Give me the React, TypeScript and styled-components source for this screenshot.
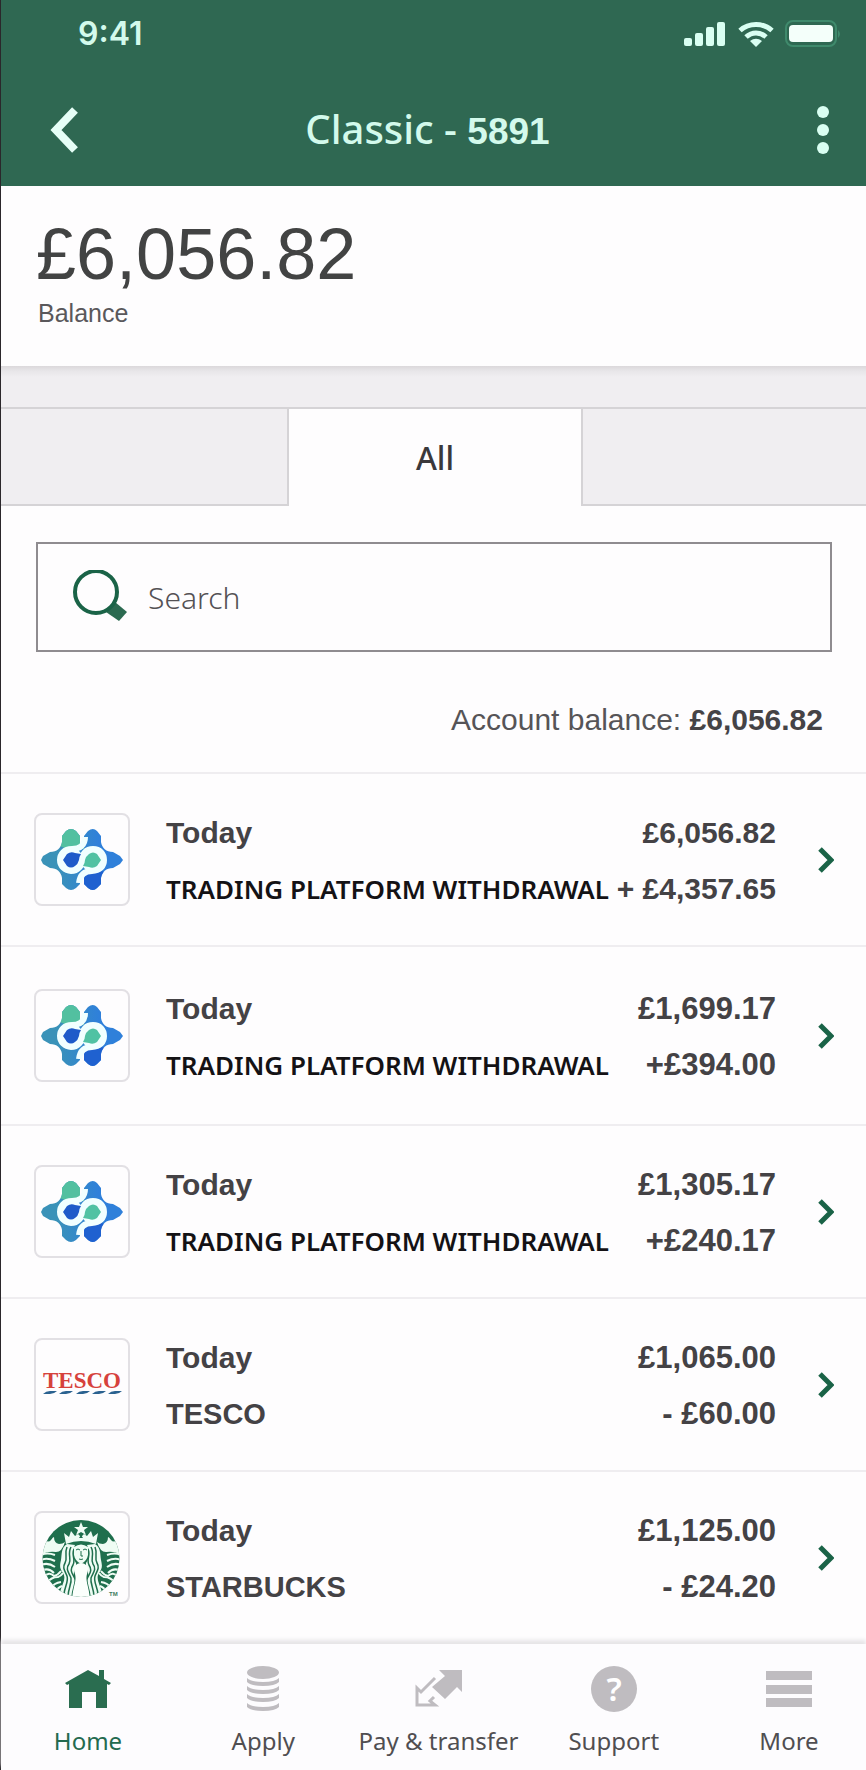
import React from "react";
import styled, { createGlobalStyle } from "styled-components";

const sans = '"Liberation Sans", Arial, sans-serif';
const brand = '"Noto Sans", "Open Sans", sans-serif';

const GlobalStyle = createGlobalStyle`
  *, *::before, *::after { box-sizing: border-box; }
  body { margin: 0; background: #fefdfe; }
  h1, p, ul { margin: 0; padding: 0; }
  button { border: 0; padding: 0; background: none; font: inherit; color: inherit; cursor: pointer; }
  a { color: inherit; text-decoration: none; }
  svg { display: block; }
`;

const Screen = styled.div`
  display: flex;
  flex-direction: column;
  min-height: 100vh;
  border-left: 1px solid #2b272b;
  background: #fefdfe;
  color: #444245;
  font-family: ${sans};
`;

const Header = styled.header`
  background: #2f6852;
  color: #d3faec;
`;

const StatusBar = styled.div`
  display: flex;
  align-items: center;
  justify-content: space-between;
  height: 68px;
  padding: 0 24px 0 77px;
`;

const Clock = styled.time`
  font: 600 32px/40px Inter, sans-serif;
`;

const StatusIcons = styled.div`
  display: flex;
  align-items: center;
  gap: 11px;
`;

const TitleBar = styled.div`
  display: flex;
  align-items: center;
  justify-content: space-between;
  height: 118px;
  padding: 6px 24px 0 12px;
`;

const BarButton = styled.button<{ $end?: boolean }>`
  display: flex;
  align-items: center;
  justify-content: ${(p) => (p.$end ? "flex-end" : "center")};
  width: 102px;
  height: 64px;
  padding-right: ${(p) => (p.$end ? "13px" : "0")};
`;

const Title = styled.h1`
  font: 500 40px/56px ${brand};
  white-space: nowrap;
`;

const AccountNumber = styled.span`
  font: 700 37px/56px ${sans};
`;

const Summary = styled.section`
  min-height: 180px;
  padding: 32px 35px 0;
`;

const Total = styled.p`
  font-size: 72px;
  line-height: 72px;
  color: #424343;
`;

const TotalLabel = styled.p`
  margin-top: 9px;
  padding-left: 2px;
  font-size: 25px;
  line-height: 28px;
  color: #5a585b;
`;

const Divider = styled.div`
  height: 41px;
  background: linear-gradient(#dbd8db, #e8e6e9 5px, #f0eef1 11px);
`;

const Tabs = styled.div`
  display: grid;
  grid-template-columns: 288fr 292fr 285fr;
  height: 99px;
  border-top: 2px solid #d5d3d6;
`;

const Tab = styled.button<{ $edge?: "left" | "right" }>`
  background: ${(p) => (p.$edge ? "#f0eef1" : "#fefdfe")};
  border: 0 solid #d5d3d6;
  border-bottom-width: ${(p) => (p.$edge ? "2px" : "0")};
  border-right-width: ${(p) => (p.$edge === "left" ? "2px" : "0")};
  border-left-width: ${(p) => (p.$edge === "right" ? "2px" : "0")};
  font: 500 32px/44px ${brand};
  color: #3a383b;
`;

const SearchBox = styled.label`
  display: flex;
  align-items: center;
  gap: 21px;
  height: 110px;
  margin: 36px 34px 0 35px;
  padding: 0 35px;
  border: 2px solid #8f8c90;
`;

const SearchInput = styled.input`
  flex: 1;
  min-width: 0;
  border: 0;
  padding: 2px 0 0;
  outline: 0;
  background: transparent;
  font: 300 30px/44px ${brand};
  color: #444245;
  &::placeholder {
    color: #545155;
    opacity: 1;
  }
`;

const AccountBalance = styled.p`
  padding: 50px 43px 34px;
  font-size: 30px;
  line-height: 36px;
  text-align: right;
  color: #565457;
  strong { color: #454346; }
`;

const List = styled.ul`
  flex: 1;
  list-style: none;
`;

const Row = styled.a<{ $tall?: boolean }>`
  display: flex;
  align-items: center;
  min-height: ${(p) => (p.$tall ? "179px" : "173px")};
  padding: 0 32px 0 33px;
  border-top: 2px solid #efedf0;
`;

const Logo = styled.span`
  flex: none;
  width: 96px;
  height: 93px;
  border: 2px solid #e2e0e4;
  border-radius: 8px;
  svg { margin: -2px; }
`;

const Details = styled.span`
  flex: 1;
  display: grid;
  grid-template-columns: 1fr auto;
  row-gap: 22px;
  margin: 0 42px 0 36px;
  padding-top: 2px;
  line-height: 34px;
  font-weight: 700;
  white-space: nowrap;
`;

const Day = styled.span`
  font-size: 30px;
`;

const Payee = styled.span<{ $platform?: boolean }>`
  font: ${(p) => (p.$platform ? `600 26px/34px ${brand}` : `700 29px/34px ${sans}`)};
  color: ${(p) => (p.$platform ? "#141215" : "#444245")};
`;

const Amount = styled.span<{ $latest?: boolean }>`
  font-size: ${(p) => (p.$latest ? "30px" : "31px")};
  text-align: right;
`;

const BottomNav = styled.nav`
  display: flex;
  justify-content: space-between;
  padding: 22px 0 13px 10px;
  background: #fdfcfe;
  box-shadow: 0 -4px 4px #e6e4e7;
`;

const NavItem = styled.a<{ $active?: boolean }>`
  display: flex;
  flex-direction: column;
  align-items: center;
  gap: 13px;
  width: 154px;
  font: 400 24px/32px ${brand};
  white-space: nowrap;
  color: ${(p) => (p.$active ? "#246a4f" : "#504e51")};
`;

const NavIcon = styled.span`
  display: flex;
  align-items: center;
  height: 46px;
`;

const Signal = () => (
  <svg width="43" height="26" fill="#d9fff2" aria-hidden="true">
    <rect x="0" y="17" width="8" height="8" rx="2" />
    <rect x="11" y="12" width="8" height="13" rx="2" />
    <rect x="22" y="6" width="8" height="19" rx="2" />
    <rect x="33" y="1" width="8" height="24" rx="2" />
  </svg>
);

const Wifi = () => (
  <svg width="36" height="26" viewBox="0 0 36 26" fill="none" stroke="#d9fff2" strokeWidth="5" aria-hidden="true">
    <path d="M2 9.5C11 1.5 25 1.5 34 9.5" />
    <path d="M8 16C14 10.5 22 10.5 28 16" />
    <path d="M12 20Q18 15.5 24 20L18 26Z" fill="#d9fff2" stroke="none" />
  </svg>
);

const Battery = () => (
  <svg width="57" height="28" aria-hidden="true">
    <rect x="1" y="1" width="50" height="25" rx="7" fill="none" stroke="#3f8a6c" strokeWidth="2" />
    <rect x="4" y="5" width="44" height="17" rx="4" fill="#f4fffa" />
    <path d="M53 10q4 4 0 8z" fill="#3f8a6c" />
  </svg>
);

const TradingLogo = () => (
  <svg width="96" height="93" viewBox="0 0 96 93" aria-hidden="true">
    <defs>
      <linearGradient id="petals" x1="0" x2="1" y1="0" y2="0">
        <stop offset="0.2" stopColor="#3a92b8" />
        <stop offset="0.7" stopColor="#2f80da" />
      </linearGradient>
      <clipPath id="petal-outline">
        <path d="M7 47L9 43L16 39C23 39 27 35 28 29V23L32 18Q37 14 42 18L46 23V34H50V23L54 18Q59 14 63 18L67 23V29C68 35 72 39 79 39L86 43L89 47L86 51L79 55C72 55 68 59 67 65V71L63 75Q59 79 54 75L50 71V60H46V71L42 75Q37 79 32 75L28 71V65C27 59 23 55 16 55L9 51Z" />
      </clipPath>
    </defs>
    <g clipPath="url(#petal-outline)">
      <rect x="5" y="12" width="86" height="68" fill="url(#petals)" />
      <path fill="#52c0a0" d="M20 12H50V36H33L26 33Z" />
      <path fill="#1f61d0" d="M47 80H72V60L66 57H50Z" />
      <circle cx="37" cy="47" r="12" fill="#f1ffff" />
      <circle cx="59" cy="47" r="12" fill="#f1ffff" />
    </g>
    <path
      fill="none"
      stroke="#f1ffff"
      strokeWidth="6"
      d="M51 24C51 32 46 36 38 36C30 36 26 41 26 47C26 53 31 58 37 58C44 58 48 53 48 47C48 41 52 36 59 36C66 36 70 41 70 47C70 53 66 58 58 58C50 58 46 62 45 70"
    />
    <path fill="#1e5bc9" d="M29 47L33 41Q37 38 41 40L47 41Q45 44 45 47Q44 51 41 53Q37 56 33 53Z" />
    <path fill="#50c2a3" d="M67 47L63 41Q59 38 55 41Q52 43 51 47Q51 50 49 53L55 54Q59 56 63 53Z" />
  </svg>
);

const TescoLogo = () => (
  <svg width="96" height="93" viewBox="0 0 96 93" aria-hidden="true">
    <text x="48" y="50" textAnchor="middle" fontFamily="Liberation Serif, serif" fontWeight="700" fontSize="23" fill="#d6423c">
      TESCO
    </text>
    <g fill="#2b6290">
      {[9, 25, 42, 58, 74].map((x) => (
        <path key={x} d={`M${x} 56Q${x + 3} 53 ${x + 7} 53H${x + 14}Q${x + 11} 56 ${x + 7} 56Z`} />
      ))}
    </g>
  </svg>
);

const SirenSide = () => (
  <g>
    <path
      fill="#effcf4"
      d="M8 27Q14 33 17 29Q19 26 20 26Q20 32 25 33Q29 33 31 31Q28 41 22 41Q12 40 8 44Z"
    />
    <g fill="none" stroke="#effcf4" strokeWidth="2">
      <path d="M7 44Q13 41 21 44" />
      <path d="M7 49Q13 46 21 50" />
      <path d="M7 54Q14 51 21 56" />
      <path d="M8 60Q14 56 20 62" />
      <path d="M10 66Q15 60 20 65Q24 64 27 60" />
      <path d="M13 72Q17 66 24 66Q27 65 29 62" />
      <path d="M17 77Q20 72 27 71" />
      <path d="M22 81Q23 77 28 75" />
    </g>
    <path
      fill="#effcf4"
      d="M33 33C27 37 28 43 27 49C26 54 25 57 29 62C33 68 27 75 26 82L42 88C41 78 44 76 41 69C37 62 43 58 42 52C38 47 39 38 41 34Z"
    />
    <g fill="none" stroke="#1f6f4d" strokeWidth="1.5">
      <path d="M33 36C30 43 34 47 31 52C28 57 31 60 33 65C35 71 30 76 30 84" />
      <path d="M37 36C33 43 38 48 35 53C31 58 35 62 37 67C38 73 34 77 34 86" />
      <path d="M40 38C37 44 42 48 39 54C35 60 39 63 41 68C42 74 38 78 38 87" />
    </g>
  </g>
);

const StarbucksLogo = () => (
  <svg width="96" height="93" viewBox="0 0 96 93" aria-hidden="true">
    <defs>
      <clipPath id="siren-disc">
        <circle cx="47" cy="47.5" r="38.5" />
      </clipPath>
    </defs>
    <g clipPath="url(#siren-disc)">
      <rect x="8" y="8" width="78" height="79" fill="#1f6f4d" />
      <SirenSide />
      <g transform="translate(94 0) scale(-1 1)">
        <SirenSide />
      </g>
      <path fill="#fbfffc" d="M47 52C54 53 55 57 53 63C51 70 55 75 56 89H38C39 75 43 70 41 63C39 57 40 53 47 52Z" />
      <path fill="#effcf4" d="M40 36Q47 31 54 36V44Q53 50 47 53Q41 50 40 44Z" />
      <g fill="none" stroke="#1f6f4d" strokeWidth="1">
        <path d="M42 39q2-2 4 0M49 39q2-2 4 0M47 40v5h2M45 48q2 1 4 0" />
      </g>
      <path fill="#effcf4" d="M32 33L30 22L35 26L37 20L41 25L44 23L47 26L50 23L53 25L57 20L59 26L64 22L62 33Q47 27 32 33Z" />
      <path fill="#effcf4" d="M47 11L49 16H54L50 19L52 24L47 21L42 24L44 19L40 16H45Z" />
      <path fill="#1f6f4d" d="M45 27L47 24L49 27Z" />
    </g>
    <text x="75" y="85" fontFamily="Liberation Sans, sans-serif" fontWeight="700" fontSize="6" fill="#3f7c60">
      TM
    </text>
  </svg>
);

const logos = { trading: TradingLogo, tesco: TescoLogo, starbucks: StarbucksLogo };

type Transaction = {
  logo: keyof typeof logos;
  payee: string;
  balance: string;
  amount: string;
  tall?: boolean;
};

const transactions: Transaction[] = [
  { logo: "trading", payee: "TRADING PLATFORM WITHDRAWAL", balance: "£6,056.82", amount: "+ £4,357.65" },
  { logo: "trading", payee: "TRADING PLATFORM WITHDRAWAL", balance: "£1,699.17", amount: "+£394.00", tall: true },
  { logo: "trading", payee: "TRADING PLATFORM WITHDRAWAL", balance: "£1,305.17", amount: "+£240.17" },
  { logo: "tesco", payee: "TESCO", balance: "£1,065.00", amount: "- £60.00" },
  { logo: "starbucks", payee: "STARBUCKS", balance: "£1,125.00", amount: "- £24.20" },
];

const HomeIcon = () => (
  <svg width="46" height="38" viewBox="0 0 46 38" fill="#2a6d50" aria-hidden="true">
    <path d="M23 0L34 6V0H39V9L46 13L44 15L42 14V38H31V22H17V38H4V14L2 15L0 13Z" />
  </svg>
);

const ApplyIcon = () => (
  <svg width="32" height="46" viewBox="0 0 32 46" fill="#bfbcc0" aria-hidden="true">
    <ellipse cx="16" cy="6.5" rx="16" ry="6.5" />
    {[12, 20, 28, 37].map((y) => (
      <path key={y} d={`M0 ${y}Q4 ${y + 4} 16 ${y + 4}T32 ${y}V${y + 4}Q28 ${y + 8} 16 ${y + 8}T0 ${y + 4}Z`} />
    ))}
  </svg>
);

const TransferIcon = () => (
  <svg width="48" height="38" viewBox="0 0 48 38" aria-hidden="true">
    <path fill="#bfbcc0" d="M24 0H47V22L42 17L30 29L17 17L30 6Z" />
    <path fill="none" stroke="#bfbcc0" strokeWidth="3" d="M20 8L6 22L2 18V35H20L15 31L19 27" />
  </svg>
);

const SupportIcon = () => (
  <svg width="46" height="46" viewBox="0 0 46 46" aria-hidden="true">
    <circle cx="23" cy="23" r="23" fill="#bfbcc0" />
    <text x="23" y="35" textAnchor="middle" fontFamily="Noto Sans, sans-serif" fontWeight="600" fontSize="33" fill="#fff">
      ?
    </text>
  </svg>
);

const MoreIcon = () => (
  <svg width="46" height="38" fill="#bfbcc0" aria-hidden="true">
    <rect y="1" width="46" height="9" />
    <rect y="15" width="46" height="9" />
    <rect y="28" width="46" height="9" />
  </svg>
);

const navItems = [
  { label: "Home", Icon: HomeIcon },
  { label: "Apply", Icon: ApplyIcon },
  { label: "Pay & transfer", Icon: TransferIcon },
  { label: "Support", Icon: SupportIcon },
  { label: "More", Icon: MoreIcon },
];

export default function App() {
  return (
    <Screen>
      <GlobalStyle />
      <Header>
        <StatusBar>
          <Clock>9:41</Clock>
          <StatusIcons>
            <Signal />
            <Wifi />
            <Battery />
          </StatusIcons>
        </StatusBar>
        <TitleBar>
          <BarButton aria-label="Back">
            <svg width="28" height="46" viewBox="0 0 28 46" fill="none" stroke="#e6fff7" strokeWidth="8" aria-hidden="true">
              <path d="M25 3L6 23L25 43" />
            </svg>
          </BarButton>
          <Title>
            Classic - <AccountNumber>5891</AccountNumber>
          </Title>
          <BarButton $end aria-label="Options">
            <svg width="12" height="48" viewBox="0 0 12 48" fill="#d9fff2" aria-hidden="true">
              <circle cx="6" cy="6" r="6" />
              <circle cx="6" cy="24" r="6" />
              <circle cx="6" cy="42" r="6" />
            </svg>
          </BarButton>
        </TitleBar>
      </Header>

      <Summary>
        <Total>£6,056.82</Total>
        <TotalLabel>Balance</TotalLabel>
      </Summary>
      <Divider />

      <Tabs role="tablist">
        <Tab $edge="left" role="tab" aria-label="Previous period" />
        <Tab role="tab" aria-selected="true">All</Tab>
        <Tab $edge="right" role="tab" aria-label="Next period" />
      </Tabs>

      <SearchBox>
        <svg width="54" height="54" viewBox="0 0 54 54" aria-hidden="true">
          <path fill="#2b6a50" d="M33 42L42 32L54 42L46 51Z" />
          <circle cx="23" cy="22" r="21" fill="#fefdfe" stroke="#1a6347" strokeWidth="4" />
        </svg>
        <SearchInput type="text" placeholder="Search" aria-label="Search" />
      </SearchBox>

      <AccountBalance>
        Account balance: <strong>£6,056.82</strong>
      </AccountBalance>

      <List>
        {transactions.map((t, i) => {
          const MerchantLogo = logos[t.logo];
          return (
            <li key={t.balance}>
              <Row href="#transaction" $tall={t.tall}>
                <Logo>
                  <MerchantLogo />
                </Logo>
                <Details>
                  <Day>Today</Day>
                  <Amount $latest={i === 0}>{t.balance}</Amount>
                  <Payee $platform={t.logo === "trading"}>{t.payee}</Payee>
                  <Amount $latest={i === 0}>{t.amount}</Amount>
                </Details>
                <svg width="16" height="26" viewBox="0 0 16 26" fill="none" stroke="#1a6347" strokeWidth="5" aria-hidden="true">
                  <path d="M2 2L13 13L2 24" />
                </svg>
              </Row>
            </li>
          );
        })}
      </List>

      <BottomNav>
        {navItems.map(({ label, Icon }, i) => (
          <NavItem key={label} href="#nav" $active={i === 0}>
            <NavIcon>
              <Icon />
            </NavIcon>
            {label}
          </NavItem>
        ))}
      </BottomNav>
    </Screen>
  );
}
